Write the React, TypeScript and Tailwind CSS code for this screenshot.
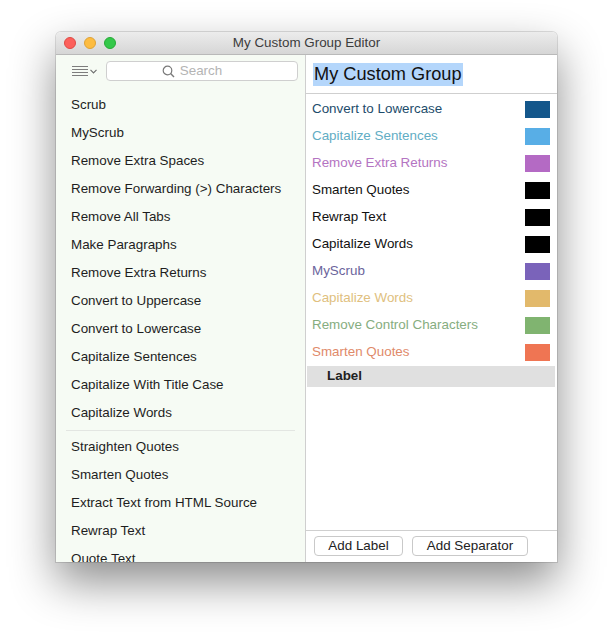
import React from "react";

const leftA = [
  "Scrub",
  "MyScrub",
  "Remove Extra Spaces",
  "Remove Forwarding (>) Characters",
  "Remove All Tabs",
  "Make Paragraphs",
  "Remove Extra Returns",
  "Convert to Uppercase",
  "Convert to Lowercase",
  "Capitalize Sentences",
  "Capitalize With Title Case",
  "Capitalize Words",
];
const leftB = [
  "Straighten Quotes",
  "Smarten Quotes",
  "Extract Text from HTML Source",
  "Rewrap Text",
  "Quote Text",
];

const rightRows: { t: string; c: string; s: string }[] = [
  { t: "Convert to Lowercase", c: "#1d4c6b", s: "#14578b" },
  { t: "Capitalize Sentences", c: "#62adc4", s: "#58aee6" },
  { t: "Remove Extra Returns", c: "#b474c2", s: "#b46ac4" },
  { t: "Smarten Quotes", c: "#111111", s: "#000000" },
  { t: "Rewrap Text", c: "#111111", s: "#000000" },
  { t: "Capitalize Words", c: "#111111", s: "#000000" },
  { t: "MyScrub", c: "#6b649c", s: "#7a63ba" },
  { t: "Capitalize Words", c: "#e0bf80", s: "#e2b96b" },
  { t: "Remove Control Characters", c: "#86ad7f", s: "#80b470" },
  { t: "Smarten Quotes", c: "#df8a6a", s: "#ef7553" },
];

export default function App() {
  return (
    <div
      className="w-[613px] h-[642px] bg-white pl-[56px] pt-[32px] overflow-hidden"
      style={{ fontFamily: '"Liberation Sans", Arial, sans-serif' }}
    >
      <div className="w-[501px] h-[530px] flex flex-col rounded-t-[5px] overflow-hidden bg-white shadow-[0_20px_45px_rgba(0,0,0,0.45),0_0_0_1px_rgba(0,0,0,0.12)]">
        {/* title bar */}
        <div className="h-[23px] shrink-0 flex items-center relative bg-gradient-to-b from-[#ececec] to-[#d6d6d6] border-b border-[#b9b9b9]">
          <div className="flex gap-[8px] pl-[8px]">
            <span className="w-[12px] h-[12px] rounded-full bg-[#fc605b] border border-[#de4a44]" />
            <span className="w-[12px] h-[12px] rounded-full bg-[#fdbc40] border border-[#dea236]" />
            <span className="w-[12px] h-[12px] rounded-full bg-[#34c84a] border border-[#27aa36]" />
          </div>
          <div className="absolute inset-0 flex items-center justify-center text-[13.4px] text-[#3c3c3c]">
            My Custom Group Editor
          </div>
        </div>
        <div className="flex flex-1 min-h-0">
          {/* left */}
          <div className="w-[250px] bg-[#f6fbf4] border-r border-[#cfcfcf] flex flex-col overflow-hidden">
            <div className="h-[36px] shrink-0 flex items-start pt-[6px] pl-[16px] pr-[7px]">
              <div className="flex items-center h-[20px] gap-[2px] w-[34px]">
                <svg width="16" height="11" viewBox="0 0 16 11">
                  <g stroke="#7d7d7d" strokeWidth="1">
                    <line x1="0" y1="0.5" x2="16" y2="0.5" />
                    <line x1="0" y1="3.5" x2="16" y2="3.5" />
                    <line x1="0" y1="6.5" x2="16" y2="6.5" />
                    <line x1="0" y1="9.5" x2="16" y2="9.5" />
                  </g>
                </svg>
                <svg width="7" height="5" viewBox="0 0 7 5">
                  <path d="M0.5 0.8 L3.5 3.8 L6.5 0.8" fill="none" stroke="#6f6f6f" strokeWidth="1.2" />
                </svg>
              </div>
              <div className="flex-1 h-[20px] bg-white border border-[#cfcfcf] rounded-[4px] flex items-center justify-center gap-[5px] pr-[20px]">
                <svg width="13" height="13" viewBox="0 0 13 13">
                  <circle cx="5.5" cy="5.5" r="4.3" fill="none" stroke="#7a7a7a" strokeWidth="1.2" />
                  <line x1="8.6" y1="8.6" x2="12" y2="12" stroke="#7a7a7a" strokeWidth="1.4" />
                </svg>
                <span className="text-[13.4px] text-[#b4b4b4]">Search</span>
              </div>
            </div>
            <div className="flex flex-col">
              {leftA.map((t, i) => (
                <div key={"a" + i} className="h-[28px] shrink-0 flex items-center pl-[15px] text-[13.4px] text-[#1e1e1e]">
                  {t}
                </div>
              ))}
              <div className="h-[6px] shrink-0 flex items-center px-[10px]">
                <div className="h-px w-full bg-[#e3e6e2]" />
              </div>
              {leftB.map((t, i) => (
                <div key={"b" + i} className="h-[28px] shrink-0 flex items-center pl-[15px] text-[13.4px] text-[#1e1e1e]">
                  {t}
                </div>
              ))}
            </div>
          </div>
          {/* right */}
          <div className="flex-1 flex flex-col bg-white">
            <div className="h-[39px] shrink-0 border-b border-[#cfcfcf] flex items-center pl-[7px]">
              <span className="bg-[#b4d6fb] text-[18.2px] leading-[23px] text-[#111] px-[1px]">My Custom Group</span>
            </div>
            <div className="flex-1 flex flex-col pt-[2px]">
              {rightRows.map((r, i) => (
                <div key={i} className="h-[27px] shrink-0 flex items-center justify-between pl-[6px] pr-[7px]">
                  <span className="text-[13.4px]" style={{ color: r.c }}>{r.t}</span>
                  <span className="w-[25px] h-[17px]" style={{ backgroundColor: r.s }} />
                </div>
              ))}
              <div className="h-[21px] mr-[2px] ml-[1px] bg-[#e0e0e0] flex items-center pl-[20px] text-[13.4px] font-bold text-[#222]">
                Label
              </div>
            </div>
            <div className="h-[32px] shrink-0 border-t border-[#cfcfcf] flex items-start pt-[5px] pl-[8px] gap-[9px]">
              <button className="h-[20px] w-[89px] bg-white border border-[#c9c9c9] rounded-[4px] text-[13.4px] text-[#222] flex items-center justify-center">
                Add Label
              </button>
              <button className="h-[20px] w-[116px] bg-white border border-[#c9c9c9] rounded-[4px] text-[13.4px] text-[#222] flex items-center justify-center">
                Add Separator
              </button>
            </div>
          </div>
        </div>
      </div>
    </div>
  );
}
